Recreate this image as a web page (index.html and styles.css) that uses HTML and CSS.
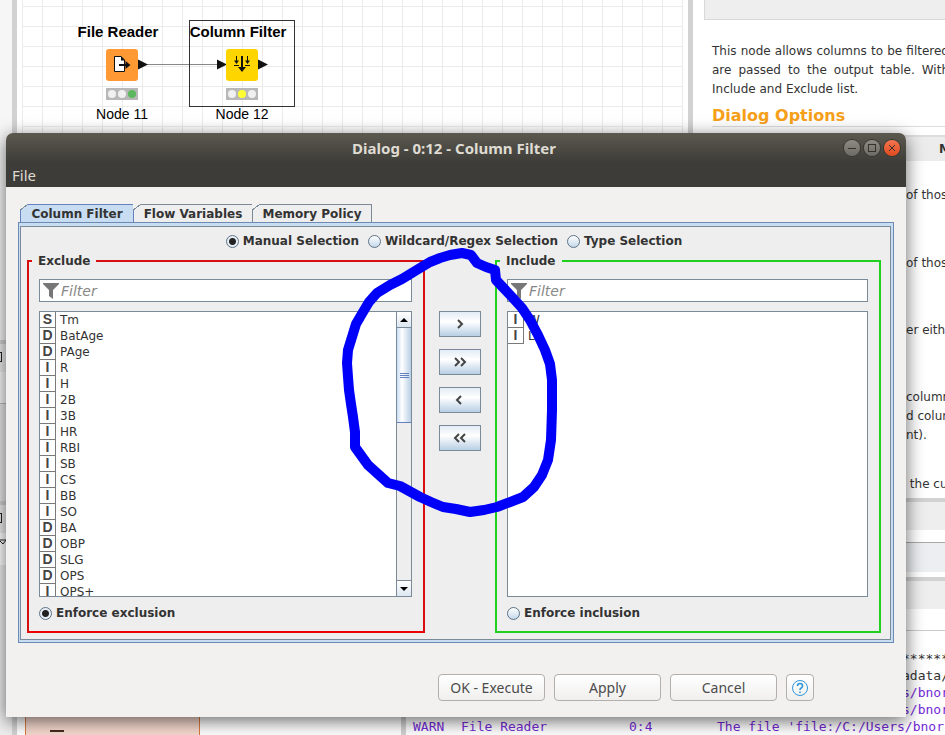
FILE: index.html
```html
<!DOCTYPE html>
<html lang="en">
<head>
<meta charset="utf-8">
<title>Dialog - 0:12 - Column Filter</title>
<link rel="stylesheet" href="styles.css">
</head>
<body>
<div class="desktop">
  <div class="workbench">
    <aside class="rail">
      <div class="rail-blank"></div>
      <div class="rail-head"><i class="rail-box"></i></div>
      <div class="rail-bar"></div>
      <div class="rail-fill"></div>
      <div class="rail-head"><i class="rail-box"></i></div>
      <div class="rail-tools"><svg viewBox="0 0 8 8"><path d="M0 1H6L3 5L0 2" fill="none" stroke="#222"/></svg></div>
      <div class="rail-rest"></div>
    </aside>
    <div class="panes">
      <div class="upper">
        <main class="canvas">
          <svg class="links" viewBox="0 0 300 130">
            <path d="M128 64.500H201" stroke="#888" fill="none"/>
            <path d="M121 59.500L131 64.500L121 69.500ZM200 59.500L210 64.500L200 69.500ZM241 59.500L251 64.500L241 69.500Z" fill="#111"/>
          </svg>
          <div class="node node-reader">
            <div class="node-name">File Reader</div>
            <svg class="node-icon" viewBox="0 0 32 32"><rect width="32" height="32" rx="3" fill="#ff9933"/><path d="M8.500 7.500H15L18.500 11V22.500H8.500Z" fill="#fff" stroke="#111"/><path d="M15 7V11.500H19Z" fill="#111"/><path d="M13 16H22" stroke="#111" stroke-width="2"/><path d="M19.500 12L24.500 16L19.500 20Z" fill="#111"/></svg>
            <div class="lights"><i></i><i></i><i class="green"></i></div>
            <div class="node-id">Node 11</div>
          </div>
          <div class="node node-filter">
            <div class="node-name">Column Filter</div>
            <svg class="node-icon" viewBox="0 0 32 32"><rect width="32" height="32" rx="3" fill="#ffd500"/><path d="M16 7V19M10.500 7V13M21.500 7V13M8 16.500H13M19 16.500H24" stroke="#111" fill="none"/><path d="M16 7V19" stroke="#111" stroke-width="2"/><path d="M12 18H20L16 23ZM8 11.500H13L10.500 15ZM19 11.500H24L21.500 15Z" fill="#111"/></svg>
            <div class="lights"><i></i><i class="yellow"></i><i></i></div>
            <div class="node-id">Node 12</div>
          </div>
        </main>
        <section class="description">
          <div class="desc-title"></div>
          <div class="desc-text">
            <p class="intro"><span>This node allows columns to be filtered</span><span>are passed to the output table. With</span>Include and Exclude list.</p>
            <h2>Dialog Options</h2>
          </div>
          <div class="option-head">M</div>
          <div class="options">
            <p>of thos</p>
            <p>of thos</p>
            <p>er eithe</p>
            <p>column<br>d colum<br>nt).</p>
            <p>&nbsp;the cu</p>
          </div>
        </section>
      </div>
      <div class="lower">
        <div class="outline"><div class="outline-box"><i></i></div></div>
        <section class="console">
          <div class="bar"></div>
          <div class="field"></div>
          <div class="bar split"></div>
          <div class="console-title"></div>
          <div class="log">
            <div class="tail dark">******</div>
            <div class="tail dark">adata/</div>
            <div class="tail">s/bnor</div>
            <div class="tail">s/bnor</div>
            <div class="entry"><span>WARN</span><span>File Reader</span><span>0:4</span><span>The file 'file:/C:/Users/bnor</span></div>
          </div>
        </section>
      </div>
    </div>
  </div>

  <form class="dialog">
    <header class="chrome">
      <div class="titlebar">
        <h1>Dialog - 0:12 - Column Filter</h1>
        <div class="window-buttons">
          <button type="button" aria-label="Minimize"><svg viewBox="0 0 16 16"><path d="M4 8.500H12" /></svg></button>
          <button type="button" aria-label="Maximize"><svg viewBox="0 0 16 16"><rect x="4.500" y="4.500" width="7" height="7"/></svg></button>
          <button type="button" class="close" aria-label="Close"><svg viewBox="0 0 16 16"><path d="M5 5L11 11M11 5L5 11"/></svg></button>
        </div>
      </div>
      <button type="button" class="menu">File</button>
    </header>

    <div class="content">
      <div class="tabs">
        <button type="button" class="tab active">Column Filter</button>
        <button type="button" class="tab">Flow Variables</button>
        <button type="button" class="tab">Memory Policy</button>
      </div>
      <div class="frame"><div class="pane">
        <div class="modes">
          <label><input type="radio" name="mode" checked>Manual Selection</label>
          <label><input type="radio" name="mode">Wildcard/Regex Selection</label>
          <label><input type="radio" name="mode">Type Selection</label>
        </div>
        <div class="lists">
          <fieldset class="group exclude">
            <legend>Exclude</legend>
            <div class="filter"><svg viewBox="0 0 16 16"><path d="M0 0H16V1L10 7V16L6 13V7L0 1Z" fill="#777"/></svg><input type="text" placeholder="Filter" aria-label="Filter excluded columns"></div>
            <div class="listbox">
              <ul>
                <li><b>S</b>Tm</li>
                <li><b>D</b>BatAge</li>
                <li><b>D</b>PAge</li>
                <li><b>I</b>R</li>
                <li><b>I</b>H</li>
                <li><b>I</b>2B</li>
                <li><b>I</b>3B</li>
                <li><b>I</b>HR</li>
                <li><b>I</b>RBI</li>
                <li><b>I</b>SB</li>
                <li><b>I</b>CS</li>
                <li><b>I</b>BB</li>
                <li><b>I</b>SO</li>
                <li><b>D</b>BA</li>
                <li><b>D</b>OBP</li>
                <li><b>D</b>SLG</li>
                <li><b>D</b>OPS</li>
                <li><b>I</b>OPS+</li>
              </ul>
              <div class="scrollbar">
                <button type="button" aria-label="Scroll up"><svg viewBox="0 0 14 14"><path d="M3 9L7 5L11 9Z"/></svg></button>
                <div class="thumb"><i></i><i></i><i></i></div>
                <div class="track"></div>
                <button type="button" aria-label="Scroll down"><svg viewBox="0 0 14 14"><path d="M3 5L7 9L11 5Z"/></svg></button>
              </div>
            </div>
            <label><input type="radio" name="enforce" checked>Enforce exclusion</label>
          </fieldset>
          <div class="movers">
            <button type="button" aria-label="Include selected"><svg viewBox="0 0 16 12"><path d="M6 2L10 6L6 10"/></svg></button>
            <button type="button" aria-label="Include all"><svg viewBox="0 0 16 12"><path d="M3 2L7 6L3 10M9 2L13 6L9 10"/></svg></button>
            <button type="button" aria-label="Exclude selected"><svg viewBox="0 0 16 12"><path d="M9 2L5 6L9 10"/></svg></button>
            <button type="button" aria-label="Exclude all"><svg viewBox="0 0 16 12"><path d="M7 2L3 6L7 10M13 2L9 6L13 10"/></svg></button>
          </div>
          <fieldset class="group include">
            <legend>Include</legend>
            <div class="filter"><svg viewBox="0 0 16 16"><path d="M0 0H16V1L10 7V16L6 13V7L0 1Z" fill="#777"/></svg><input type="text" placeholder="Filter" aria-label="Filter included columns"></div>
            <div class="listbox">
              <ul>
                <li><b>I</b>W</li>
                <li><b>I</b>L</li>
              </ul>
            </div>
            <label><input type="radio" name="enforce">Enforce inclusion</label>
          </fieldset>
        </div>
      </div></div>
    </div>

    <footer class="actions">
      <button type="button">OK - Execute</button>
      <button type="button">Apply</button>
      <button type="button">Cancel</button>
      <button type="button" class="help" aria-label="Help"><svg viewBox="0 0 18 18"><circle cx="9" cy="9" r="7.500"/><path d="M6.500 7Q6.500 4.500 9 4.500T11.500 7Q11.500 8.300 10.200 9Q9 9.600 9 11M9 12.500V14" stroke-width="1.600"/></svg></button>
    </footer>
  </form>

  <svg class="ink" viewBox="0 0 220 280"><path d="M122 13L110 15L100 18L90 22L80 28L62 39L50 45L37 53L29 62L23 72L16 84L12 97L8 110L7 123L8 137L9 150L11 164L13 177L15 192L15 207L28 225L48 243L60 246L80 257L91 262L103 267L116 269L130 272L144 270L157 267L183 257L194 247L202 235L208 220L211 200L212 170L212 140L210 124L205 110L198 95L190 80L182 68L172 57L156 40L155 30L146 27L137 23L131 15Z"/></svg>
</div>
</body>
</html>
```
FILE: styles.css
```css
* { box-sizing: border-box; }
body { margin: 0; font: 12px/16px "DejaVu Sans", sans-serif; color: #333; }
button { font: inherit; color: inherit; padding: 0; margin: 0; border: 0; background: none; }
p, h1, h2, ul { margin: 0; padding: 0; list-style: none; }
svg { display: block; }

.desktop { position: relative; height: 100vh; overflow: hidden; background: #fff; }

/* application behind the dialog */
.workbench { display: flex; height: 100%; }
.rail { width: 17px; flex: none; display: flex; flex-direction: column; background: #f6f6f6; border-right: 5px solid #d2d2d2; }
.rail-blank { height: 344px; border-bottom: 4px solid #d2d2d2; }
.rail-head { height: 28px; background: #ececec; padding-top: 8px; }
.rail-box { display: block; width: 2px; height: 10px; border: 1px solid #222; border-left: 0; }
.rail-bar { height: 32px; background: #f8f8f8; border-bottom: 1px solid #bbb; }
.rail-fill { height: 101px; background: #e8e8e8; border-bottom: 4px solid #d2d2d2; }
.rail-tools { height: 32px; background: #fff; padding-top: 6px; }
.rail-tools svg { width: 8px; height: 8px; }
.rail-rest { flex: 1; background: #eee; }
.panes { flex: 1; min-width: 0; display: flex; flex-direction: column; }
.upper { display: flex; height: 500px; }
.canvas {
  position: relative; flex: 1; border-right: 5px solid #fff; border-left: 5px solid #fff;
  background: linear-gradient(90deg, #ebebeb 1px, transparent 1px) 0 6px / 20px 20px,
    linear-gradient(#ebebeb 1px, transparent 1px) 0 6px / 20px 20px, #fff;
}
.links { position: absolute; left: -5px; top: 0; width: 300px; height: 130px; }
.node {
  position: absolute; top: 20px; width: 106px; display: flex; flex-direction: column; align-items: center;
  font-family: "Liberation Sans", sans-serif; color: #000;
}
.node-reader { left: 47px; }
.node-filter { left: 167px; }
.node-filter::before { content: ""; position: absolute; inset: 0 0 auto; height: 85px; border: 1px solid #333; }
.node-name { font-size: 15px; line-height: 18px; font-weight: bold; padding-top: 3px; margin-right: 8px; white-space: nowrap; }
.node-icon { width: 32px; height: 32px; margin-top: 8px; }
.lights { display: flex; justify-content: space-evenly; align-items: center; width: 32px; height: 12px; margin: 7px 0 5px; background: #b8b8b8; }
.lights i { width: 8px; height: 8px; border-radius: 50%; background: #f0f0f0; }
.lights .green { background: #5cb85c; }
.lights .yellow { background: #ffff33; }
.node-id { font-size: 14px; line-height: 18px; }

.description { width: 257px; flex: none; border-left: 5px solid #d2d2d2; overflow: hidden; }
.desc-title { height: 20px; margin-left: 11px; background: #eeeeef; border: solid #d8d8d8; border-width: 0 0 1px 1px; }
.desc-text { padding: 22px 0 0 19px; }
.intro { width: 237px; line-height: 19px; white-space: nowrap; }
.intro span { display: block; text-align-last: justify; }
h2 { font-size: 16px; line-height: 20px; margin-top: 7px; color: #f6a01a; border-bottom: 1px solid #ddd; }
.option-head { height: 26px; margin: 8px 0 0; border-top: 2px solid #ddd; background: #ececec; padding: 4px 0 0 246px; font-weight: bold; }
.options { display: flex; flex-direction: column; padding: 25px 0 0 213px; line-height: 19px; white-space: nowrap; gap: 49px; }
.options p:nth-child(n+3) { margin-top: -1px; }
.options p:last-child { margin-top: -19px; }

.lower { flex: 1; display: flex; }
.outline { width: 389px; flex: none; border-right: 5px solid #d2d2d2; padding-left: 8px; }
.outline-box { width: 175px; height: 100%; background: #f6d9ce; border: solid #e07a3a; border-width: 0 1px; display: flex; flex-direction: column; justify-content: flex-end; }
.outline-box i { width: 14px; height: 2px; margin: 0 0 3px 24px; background: #4a2a20; }
.console { flex: 1; min-width: 0; }
.bar { height: 32px; background: #eee; border-top: 4px solid #d2d2d2; }
.field { height: 30px; margin: 12px 0 5px; background: #eceef1; border-top: 1px solid #aaa; }
.console-title { height: 22px; border-bottom: 1px solid #ccc; }
.log { padding: 19px 0 0 7px; font: 13px/17px "DejaVu Sans Mono", monospace; color: #7429d6; white-space: nowrap; overflow: hidden; }
.tail { padding-left: 489px; }
.dark { color: #333; }
.entry { display: grid; grid-template-columns: 48px 168px 88px 1fr; }

/* dialog window */
.dialog {
  position: absolute; inset: 133px 39px 18px 6px; display: flex; flex-direction: column;
  background: #f2f1f0; border-radius: 7px 7px 0 0; box-shadow: 0 4px 18px rgba(0, 0, 0, .6);
}
.chrome { height: 54px; flex: none; border-radius: 7px 7px 0 0; background: linear-gradient(#5b594f, #3d3c38 30px); color: #dfdbd2; font: 15px/20px "Noto Sans", sans-serif; }
.titlebar { display: grid; grid-template-columns: 1fr auto 1fr; align-items: center; height: 30px; padding: 0 6px 0 2px; }
h1 { grid-column: 2; font-size: 15px; line-height: 20px; font-weight: bold; }
.window-buttons { display: flex; justify-content: flex-end; gap: 4px; }
.window-buttons button { width: 16px; height: 16px; border-radius: 50%; background: linear-gradient(#8d8b83, #6c6a64); box-shadow: 0 0 0 1px #383733; }
.window-buttons .close { background: linear-gradient(#f3754f, #e04a1e); }
.window-buttons path, .window-buttons rect { fill: none; stroke: #33322e; }
.menu { display: block; margin-left: 6px; line-height: 24px; }

.content { flex: 1; min-height: 0; display: flex; flex-direction: column; margin: 17px 12px 0 12px; }
.tabs { display: flex; font-weight: bold; padding-left: 2px; }
.tab { position: relative; height: 18px; width: 119px; border: solid #7a8a99; border-width: 1px 1px 0 0; background: #eee; line-height: 18px; }
.tab::before { content: ""; position: absolute; left: -1px; top: -1px; width: 8px; height: 6px; background: linear-gradient(143deg, #f0f0ef 46%, #7a8a99 47%, #7a8a99 56%, transparent 57%); }
.tab.active { width: 114px; background: #c8ddf2; border-color: #6382bf; border-left-width: 1px; }
.frame { flex: 1; min-height: 0; border: 1px solid #6b8bb5; background: #c8ddf2; padding: 3px 2px 2px 1px; }
.pane { height: 100%; display: flex; flex-direction: column; background: #eee; border: 1px solid #7a8a99; padding: 6px 9px 6px 6px; font-weight: bold; }
.modes { display: flex; justify-content: center; gap: 9px; height: 20px; flex: none; align-items: flex-start; }
label { display: flex; align-items: center; gap: 4px; line-height: 16px; flex: none; }
input[type="radio"] { appearance: none; width: 13px; height: 13px; margin: 0; border: 1px solid #5f7387; border-radius: 50%; background: linear-gradient(#fff, #c4d8ea); }
input[type="radio"]:checked { background: radial-gradient(circle, #222 3px, #e6edf4 4px); }
.lists { flex: 1; min-height: 0; display: grid; grid-template-columns: 398fr 70px 386fr; grid-template-rows: minmax(0, 1fr); }
.group { min-width: 0; min-height: 0; display: flex; flex-direction: column; margin: 0; padding: 10px 11px 10px 10px; border: 2px solid #d80f10; }
.exclude { border-bottom-color: #ec0000; }
.include { border-color: #1fd01f; }
legend { margin-left: -7px; padding: 0 6px; line-height: 16px; }
.filter { display: flex; align-items: center; height: 23px; flex: none; padding-left: 3px; gap: 2px; background: #fff; border: 1px solid #7a8a99; }
.filter svg { width: 16px; height: 16px; flex: none; }
.filter input { flex: 1; min-width: 0; border: 0; padding: 0; outline: 0; background: none; font: italic 14px/18px "DejaVu Sans", sans-serif; }
.filter input::placeholder { color: #888; opacity: 1; }
.listbox { flex: 1 1 0; min-height: 0; display: flex; margin: 9px 0 8px; border: 1px solid #7a8a99; background: #fff; font-weight: normal; overflow: hidden; }
.listbox ul { flex: 1; overflow: hidden; }
.listbox li { display: flex; height: 16px; gap: 4px; }
.listbox b { width: 16px; height: 16px; border: solid #7a7a7a; border-width: 0 1px 1px 0; font: bold 14px/15px "Liberation Sans", sans-serif; text-align: center; color: #444; }
.scrollbar { width: 15px; flex: none; display: flex; flex-direction: column; border-left: 1px solid #7a8a99; background: #eee; }
.scrollbar button { height: 16px; border: solid #7a8a99; border-width: 0 0 1px; background: linear-gradient(#fff, #dde7f0); }
.scrollbar button:last-child { border-width: 1px 0 0; }
.scrollbar button svg { width: 14px; height: 14px; }
.thumb { height: 95px; display: flex; flex-direction: column; align-items: center; justify-content: center; gap: 1px; border-bottom: 1px solid #6382bf; background: linear-gradient(90deg, #c8ddf2, #fff 35%, #b8cfe5); }
.thumb i { width: 9px; height: 1px; background: #6382bf; }
.track { flex: 1; }
.movers { display: flex; flex-direction: column; align-items: center; gap: 12px; padding-top: 58px; }
.movers button { display: grid; place-items: center; width: 42px; height: 26px; border: 1px solid #7a8a99; background: linear-gradient(#e2ecf5, #fff 40%, #b8cfe5); }
.movers svg { width: 16px; height: 12px; fill: none; stroke: #444; stroke-width: 2; }

.actions { display: flex; justify-content: flex-end; gap: 9px; padding: 31px 92px 16px 0; font: 14px/20px "Noto Sans", sans-serif; color: #4c4c4c; }
.actions button { width: 107px; height: 27px; border: 1px solid #b3afaa; border-radius: 4px; background: linear-gradient(#fff, #f0efee); }
.actions .help { width: 28px; display: grid; place-items: center; }
.help svg { width: 18px; height: 18px; fill: none; stroke: #2f96dc; }

/* freehand marker over the window */
.ink { position: absolute; left: 340px; top: 240px; width: 220px; height: 280px; pointer-events: none; fill: none; stroke: #0000fa; stroke-width: 10; stroke-linejoin: round; }
```
